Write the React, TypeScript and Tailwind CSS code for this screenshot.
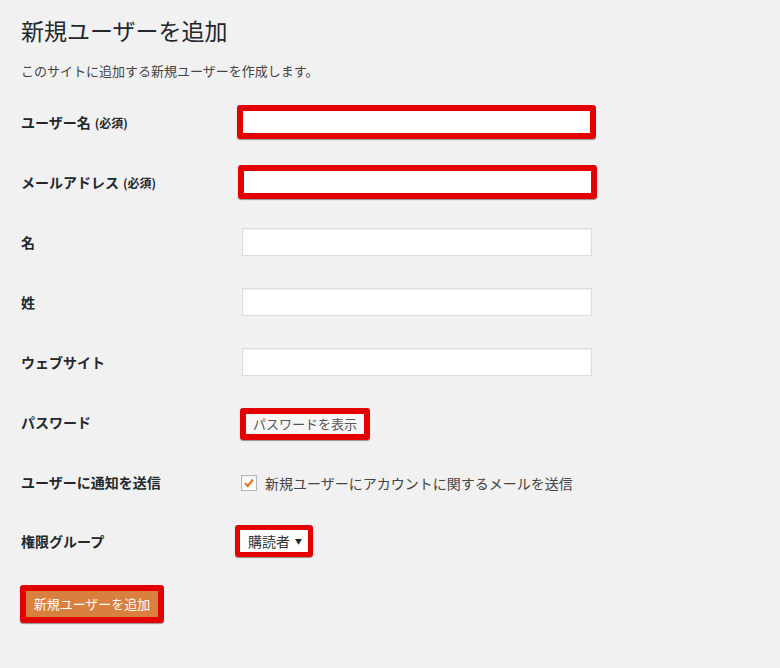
import React from "react";

const font = { fontFamily: '"Noto Sans CJK JP", "Noto Sans", sans-serif' };

interface IRow {
  label: string;
  required?: boolean;
  children: React.ReactNode;
}

const FormRow: React.FC<IRow> = ({ label, required, children }) => {
  return (
    <div className="flex h-[60px] items-center">
      <div className="w-[221px] shrink-0 text-[14px] font-bold text-[#23282d]">
        {label}
        {required && <span className="ml-1 text-[12px] font-bold">(必須)</span>}
      </div>
      <div className="flex items-center">{children}</div>
    </div>
  );
};

const PlainInput = () => (
  <input
    type="text"
    className="h-[28px] w-[350px] border border-[#dddddd] bg-white shadow-[inset_0_1px_2px_rgba(0,0,0,0.07)] outline-none"
  />
);

const RedInput: React.FC<{ offset: string }> = ({ offset }) => (
  <div
    className={`${offset} rounded-[3px] border-[6px] border-[#e30000] shadow-[0_1px_1px_rgba(0,0,0,0.4)]`}
  >
    <input type="text" className="block h-[22px] w-[347px] bg-white outline-none" />
  </div>
);

export default function App() {
  return (
    <div className="min-h-[668px] w-full bg-[#f1f1f1] px-[21px] pt-[14px]" style={font}>
      <h1 className="text-[23px] font-normal leading-[32px] text-[#23282d]">新規ユーザーを追加</h1>
      <p className="mt-[16px] text-[13px] leading-[18px] text-[#444]">
        このサイトに追加する新規ユーザーを作成します。
      </p>

      <div className="mt-[12px]">
        <FormRow label="ユーザー名" required>
          <RedInput offset="-ml-[5px]" />
        </FormRow>
        <FormRow label="メールアドレス" required>
          <RedInput offset="-ml-[4px]" />
        </FormRow>
        <FormRow label="名">
          <PlainInput />
        </FormRow>
        <FormRow label="姓">
          <PlainInput />
        </FormRow>
        <FormRow label="ウェブサイト">
          <PlainInput />
        </FormRow>
        <FormRow label="パスワード">
          <div className="-ml-[2px] mt-[3px] rounded-[3px] border-[6px] border-[#e30000] shadow-[0_1px_1px_rgba(0,0,0,0.4)]">
            <button className="block h-[20px] w-[118px] bg-[#f7f7f7] text-[13px] leading-[20px] text-[#555]">
              パスワードを表示
            </button>
          </div>
        </FormRow>
        <FormRow label="ユーザーに通知を送信">
          <div className="flex items-center pt-[2px]">
            <span className="-ml-[1px] flex h-[16px] w-[16px] items-center justify-center border border-[#b4b9be] bg-white shadow-[inset_0_1px_2px_rgba(0,0,0,0.1)]">
              <svg width="12" height="12" viewBox="0 0 12 12">
                <path d="M2 6.2 L4.8 9 L10 2.5" fill="none" stroke="#e0772e" strokeWidth="2.2" />
              </svg>
            </span>
            <span className="ml-[8px] text-[14px] text-[#444]">
              新規ユーザーにアカウントに関するメールを送信
            </span>
          </div>
        </FormRow>
        <div className="flex h-[58px] items-center">
          <div className="w-[221px] shrink-0 text-[14px] font-bold text-[#23282d]">権限グループ</div>
          <div className="-ml-[7px] rounded-[3px] border-[5px] border-[#e30000] shadow-[0_1px_1px_rgba(0,0,0,0.4)]">
            <div className="flex h-[22px] w-[68px] items-center justify-between bg-white pl-[8px] pr-[6px]">
              <span className="text-[14px] text-[#333]">購読者</span>
              <span className="text-[7px] text-[#222]">▼</span>
            </div>
          </div>
        </div>
      </div>

      <div className="mt-[15px] inline-block -ml-[1px] rounded-[3px] border-[6px] border-[#e30000] shadow-[0_1px_1px_rgba(0,0,0,0.4)]">
        <button className="block h-[26px] w-[132px] bg-[#d9803e] text-[13px] leading-[26px] text-white">
          新規ユーザーを追加
        </button>
      </div>
    </div>
  );
}
